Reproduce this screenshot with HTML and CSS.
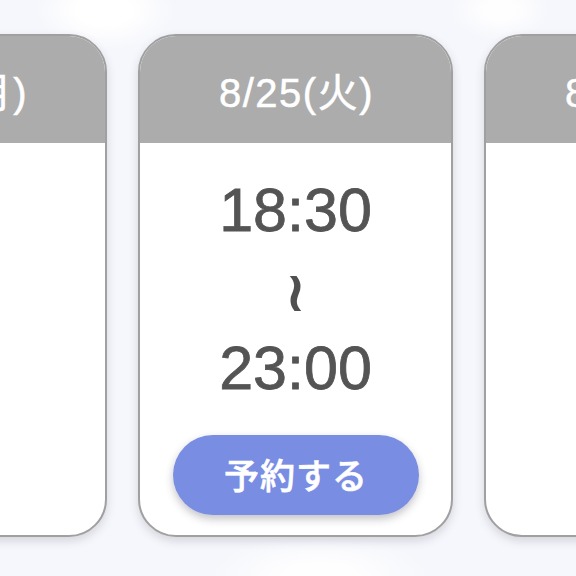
FILE: index.html
```html
<!DOCTYPE html>
<html lang="ja">
<head>
<meta charset="utf-8">
<title>予約</title>
<link rel="stylesheet" href="styles.css">
</head>
<body>
<div class="row">
  <div class="card">
    <div class="card-head">8/24(月)</div>
    <div class="card-body"></div>
  </div>
  <div class="card">
    <div class="card-head">8/25(火)</div>
    <div class="card-body">
      <div class="time">18:30</div>
      <div class="tilde">≀</div>
      <div class="time time-end">23:00</div>
      <button class="reserve">予約する</button>
    </div>
  </div>
  <div class="card">
    <div class="card-head">8/26(水)</div>
    <div class="card-body"></div>
  </div>
</div>
</body>
</html>
```
FILE: styles.css
```css
html, body {
  margin: 0;
  padding: 0;
}
body {
  width: 576px;
  height: 576px;
  overflow: hidden;
  background:
    radial-gradient(ellipse 70px 40px at 105px 10px, #ffffff 40%, rgba(255,255,255,0) 100%),
    radial-gradient(ellipse 50px 30px at 500px 10px, rgba(255,255,255,0.9) 30%, rgba(255,255,255,0) 100%),
    radial-gradient(ellipse 110px 40px at 320px 576px, rgba(255,255,255,0.9) 30%, rgba(255,255,255,0) 100%),
    #f6f7fc;
  font-family: "Liberation Sans", "Noto Sans CJK JP", sans-serif;
}
.row {
  display: flex;
  gap: 31px;
  margin-left: -208px;
  padding-top: 34px;
  width: 1100px;
}
.card {
  flex: 0 0 315px;
  width: 315px;
  height: 503px;
  box-sizing: border-box;
  border: 2px solid #a0a0a0;
  border-radius: 38px;
  background: #ffffff;
  overflow: hidden;
  box-shadow: 0 4px 10px rgba(60, 60, 80, 0.18);
  display: flex;
  flex-direction: column;
}
.card-head {
  height: 107px;
  flex: 0 0 107px;
  background: #acacac;
  color: #ffffff;
  font-size: 40px;
  letter-spacing: 1.5px;
  -webkit-text-stroke: 0.5px #ffffff;
  display: flex;
  align-items: center;
  justify-content: center;
  padding-left: 2px;
  box-sizing: border-box;
}
.card-body {
  flex: 1;
  display: flex;
  flex-direction: column;
  align-items: center;
  padding-top: 32px;
}
.time {
  font-size: 61px;
  line-height: 70px;
  color: #545454;
  -webkit-text-stroke: 0.8px #545454;
}
.tilde {
  margin-top: 27px;
  height: 40px;
  line-height: 40px;
  font-family: "DejaVu Sans", sans-serif;
  font-weight: 700;
  font-size: 56px;
  color: #505050;
  display: flex;
  align-items: center;
  justify-content: center;
  overflow: visible;
}
.time-end {
  margin-top: 21px;
}
.reserve {
  margin-top: 32px;
  width: 246px;
  height: 80px;
  border: none;
  border-radius: 40px;
  background: #798de2;
  color: #ffffff;
  font-family: "Noto Sans CJK JP", sans-serif;
  font-weight: 500;
  font-size: 35px;
  letter-spacing: 1px;
  -webkit-text-stroke: 0.6px #ffffff;
  box-shadow: 0 4px 8px rgba(40, 40, 60, 0.28);
  padding: 0 0 4px 1px;
}
```
